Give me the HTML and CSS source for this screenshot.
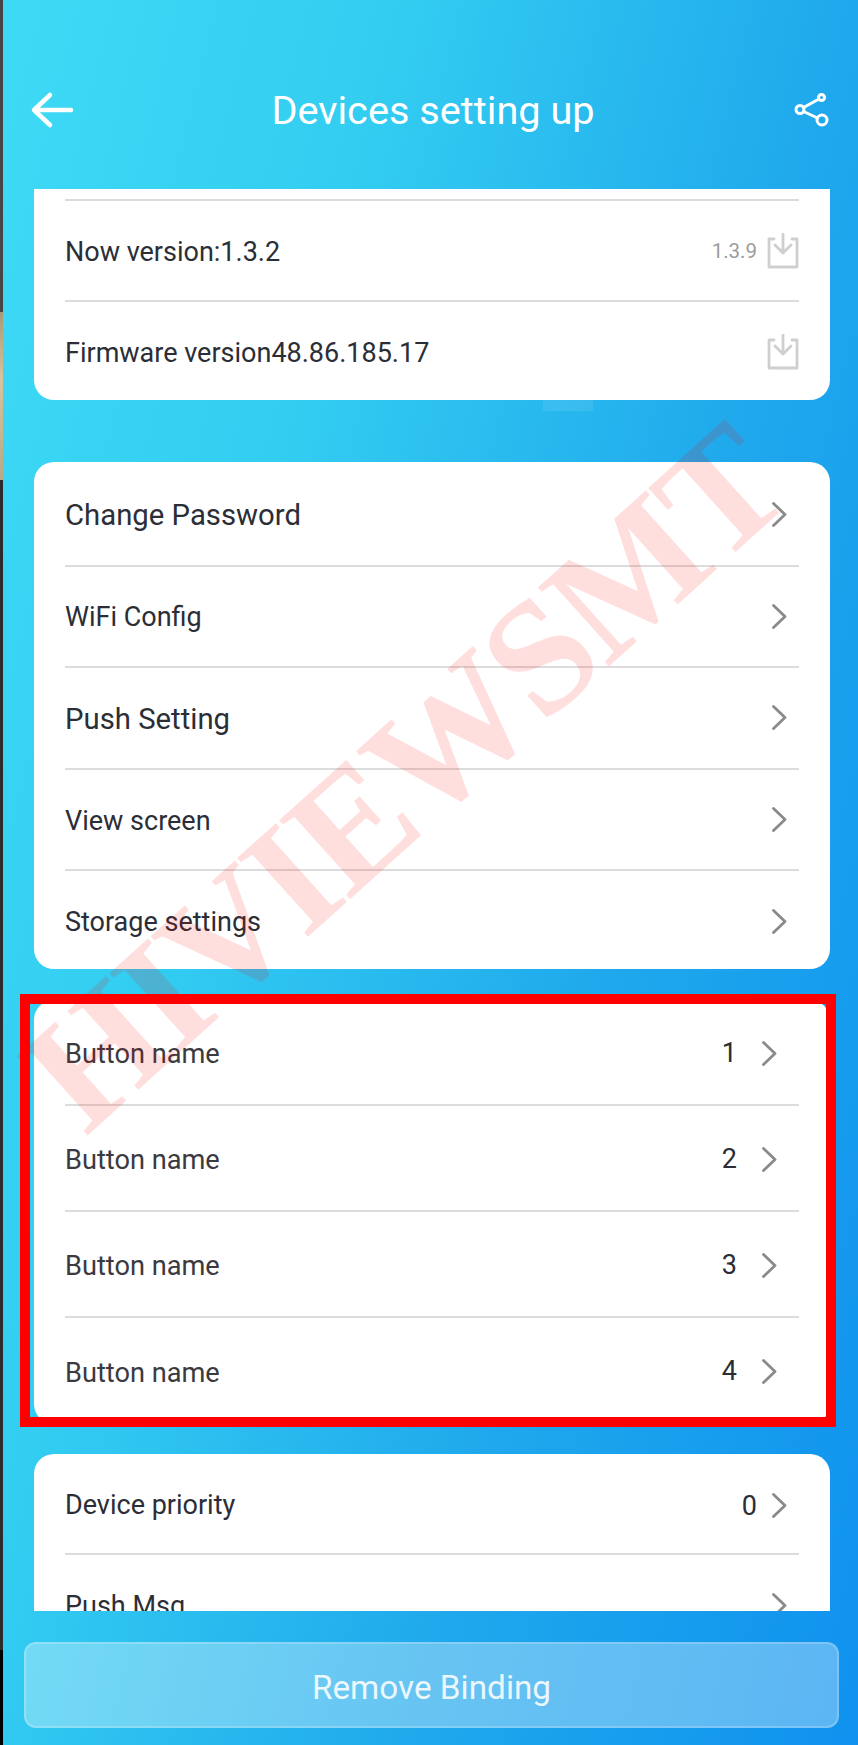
FILE: index.html
```html
<!DOCTYPE html>
<html lang="en">
<head>
<meta charset="utf-8">
<title>Devices setting up</title>
<link rel="stylesheet" href="styles.css">
</head>
<body>
<div class="stage">
  <div class="edge">
    <div class="edge-a"></div>
    <div class="edge-b"></div>
    <div class="edge-c"></div>
    <div class="edge-d"></div>
  </div>
  <main class="screen">
    <header class="header">
      <svg class="head-icon" viewBox="0 0 44 44" aria-hidden="true"><path class="head-stroke" d="M4 22H41M20 7L4 22L20 37"/></svg>
      <h1 class="title">Devices setting up</h1>
      <svg class="head-icon" viewBox="0 0 44 44" aria-hidden="true"><g class="head-stroke thin"><circle cx="29.500" cy="9.500" r="3"/><circle cx="8" cy="21.500" r="4"/><circle cx="30" cy="32" r="5"/><path d="M27 11L11.500 19.500M11.500 23.500L25.500 30"/></g></svg>
    </header>
    <div class="scroller">
      <section class="card card-cut">
        <div class="row row-stub"></div>
        <div class="row row-fw">
          <span class="label s27 down-2">Now version:1.3.2</span>
          <span class="tail"><span class="latest">1.3.9</span>
            <svg class="dl" viewBox="0 0 32 36" aria-hidden="true"><path d="M7 6H2V34H30V6H25M16 1V20M8 12L16 20L24 12"/></svg></span>
        </div>
        <div class="row row-fw row-last">
          <span class="label s27">Firmware version48.86.185.17</span>
          <span class="tail up-2"><svg class="dl" viewBox="0 0 32 36" aria-hidden="true"><path d="M7 6H2V34H30V6H25M16 1V20M8 12L16 20L24 12"/></svg></span>
        </div>
      </section>

      <section class="card card-menu">
        <div class="row row-menu"><span class="label s29">Change Password</span><svg class="chev" viewBox="0 0 15 25"><path d="M1.500 1.500L13 12.500L1.500 23.500"/></svg></div>
        <div class="row row-menu"><span class="label s27 down-2">WiFi Config</span><svg class="chev" viewBox="0 0 15 25"><path d="M1.500 1.500L13 12.500L1.500 23.500"/></svg></div>
        <div class="row row-menu"><span class="label s29 down-2">Push Setting</span><svg class="chev" viewBox="0 0 15 25"><path d="M1.500 1.500L13 12.500L1.500 23.500"/></svg></div>
        <div class="row row-menu"><span class="label s27 down-4">View screen</span><svg class="chev" viewBox="0 0 15 25"><path d="M1.500 1.500L13 12.500L1.500 23.500"/></svg></div>
        <div class="row row-menu row-last"><span class="label s27">Storage settings</span><svg class="chev" viewBox="0 0 15 25"><path d="M1.500 1.500L13 12.500L1.500 23.500"/></svg></div>
      </section>

      <section class="card card-buttons">
        <div class="row row-btn"><span class="label btn-label">Button name</span><span class="tail down-2"><span class="num">1</span><svg class="chev chev-in" viewBox="0 0 15 25"><path d="M1.500 1.500L13 12.500L1.500 23.500"/></svg></span></div>
        <div class="row row-btn"><span class="label btn-label">Button name</span><span class="tail down-2"><span class="num">2</span><svg class="chev chev-in" viewBox="0 0 15 25"><path d="M1.500 1.500L13 12.500L1.500 23.500"/></svg></span></div>
        <div class="row row-btn"><span class="label btn-label">Button name</span><span class="tail down-2"><span class="num">3</span><svg class="chev chev-in" viewBox="0 0 15 25"><path d="M1.500 1.500L13 12.500L1.500 23.500"/></svg></span></div>
        <div class="row row-btn row-last"><span class="label btn-label">Button name</span><span class="tail"><span class="num">4</span><svg class="chev chev-in" viewBox="0 0 15 25"><path d="M1.500 1.500L13 12.500L1.500 23.500"/></svg></span></div>
      </section>

      <section class="card card-more">
        <div class="row row-prio"><span class="label s27 down-2">Device priority</span><span class="tail down-4"><span class="num num-prio">0</span><svg class="chev" viewBox="0 0 15 25"><path d="M1.500 1.500L13 12.500L1.500 23.500"/></svg></span></div>
        <div class="row row-prio row-last"><span class="label s27">Push Msg</span><svg class="chev" viewBox="0 0 15 25"><path d="M1.500 1.500L13 12.500L1.500 23.500"/></svg></div>
      </section>
    </div>
    <footer class="footer">
      <button class="remove" type="button">Remove Binding</button>
    </footer>
  </main>
  <div class="patch"></div>
  <div class="watermark">HIVIEWSMT</div>
  <div class="callout"></div>
</div>
</body>
</html>
```

FILE: styles.css
```css
* { box-sizing: border-box; }

html, body {
  margin: 0;
  padding: 0;
  background: #000;
}

.stage {
  position: relative;
  display: flex;
  width: 858px;
  height: 1745px;
  overflow: hidden;
  font-family: Roboto, "Liberation Sans", sans-serif;
}

.edge {
  display: flex;
  flex-direction: column;
  flex: 0 0 3px;
}
.edge-a { height: 312px; background: #464646; }
.edge-b { height: 168px; background: linear-gradient(#a89878, #d8c49c 40%, #b8a888); }
.edge-c { height: 1170px; background: #2c2c2c; }
.edge-d { flex: 1; background: #000; }

.screen {
  flex: 1;
  display: flex;
  flex-direction: column;
  background: linear-gradient(104deg, #3edaf5 0%, #33cdf1 30%, #1fa8ec 66%, #0f92ef 100%);
}

.header {
  flex: 0 0 189px;
  display: flex;
  align-items: center;
  justify-content: space-between;
  padding: 30px 22px 0 27px;
}
.head-icon { width: 44px; height: 44px; }
.head-stroke {
  fill: none;
  stroke: #fff;
  stroke-width: 4.500;
  stroke-linecap: round;
  stroke-linejoin: round;
}
.thin { stroke-width: 3; }
.title {
  margin: 0;
  padding-top: 2px;
  font-size: 39.700px;
  font-weight: 400;
  color: #fff;
}

.scroller {
  flex: 0 0 1422px;
  height: 1422px;
  overflow: hidden;
  padding: 0 28px 0 31px;
}

.card {
  background: #fff;
  border-radius: 20px;
  padding: 0 31px;
}
.card-cut { border-radius: 0 0 20px 20px; height: 211px; }
.card-menu { margin-top: 62px; height: 507px; padding-top: 3px; }
.card-buttons { margin-top: 31px; height: 424px; }
.card-more { margin-top: 30px; height: 250px; }

.row {
  display: flex;
  align-items: center;
  justify-content: space-between;
  border-bottom: 2px solid #dcdcdc;
}
.row-last { border-bottom: 0; }
.row-stub { height: 12px; }
.row-fw { height: 101px; }
.row-menu { height: 101.500px; }
.row-btn { height: 106px; }
.row-prio { height: 101px; }

.label { color: #2b2e36; }
.s27 { font-size: 27px; }
.s29 { font-size: 29.300px; }
.btn-label { font-size: 27.200px; color: #3a3a40; padding-top: 3px; }
.down-2 { padding-top: 2px; }
.down-4 { padding-top: 4px; }
.up-2 { padding-bottom: 2px; }

.tail {
  display: flex;
  align-items: center;
}
.latest {
  font-size: 20.500px;
  color: #9c9c9c;
  margin-right: 10px;
}
.num {
  font-size: 27px;
  color: #2b2e36;
  margin-right: 25px;
}
.num-prio { margin-right: 15px; }

.dl {
  width: 32px;
  height: 36px;
  fill: none;
  stroke: #cfcfcf;
  stroke-width: 2.800;
  stroke-linejoin: round;
  stroke-linecap: round;
}

.chev {
  width: 15px;
  height: 25px;
  margin-right: 12px;
  fill: none;
  stroke: #8a8a8a;
  stroke-width: 2.800;
  stroke-linecap: round;
  stroke-linejoin: round;
}
.chev-in { margin-right: 22px; }

.footer {
  flex: 1;
  padding: 31px 19px 17px 21px;
}
.remove {
  display: block;
  width: 100%;
  height: 86px;
  padding: 4px 0 0;
  border: 2px solid rgba(255, 255, 255, 0.2);
  border-radius: 12px;
  background: rgba(255, 255, 255, 0.32);
  color: rgba(255, 255, 255, 0.88);
  font-family: Roboto, "Liberation Sans", sans-serif;
  font-size: 33.300px;
}

.patch {
  position: absolute;
  left: 543px;
  top: 400px;
  width: 50px;
  height: 11px;
  background: rgba(255, 255, 255, 0.09);
}

.watermark {
  position: absolute;
  left: 404px;
  top: 778px;
  transform: translate(-50%, -50%) rotate(-42deg);
  font-family: "Liberation Serif", serif;
  font-weight: 700;
  font-size: 162px;
  letter-spacing: -4px;
  line-height: 1;
  white-space: nowrap;
  color: rgba(255, 0, 0, 0.13);
  pointer-events: none;
}

.callout {
  position: absolute;
  left: 20px;
  top: 994px;
  width: 816px;
  height: 433px;
  border: 10px solid #ff0000;
  pointer-events: none;
}
```
